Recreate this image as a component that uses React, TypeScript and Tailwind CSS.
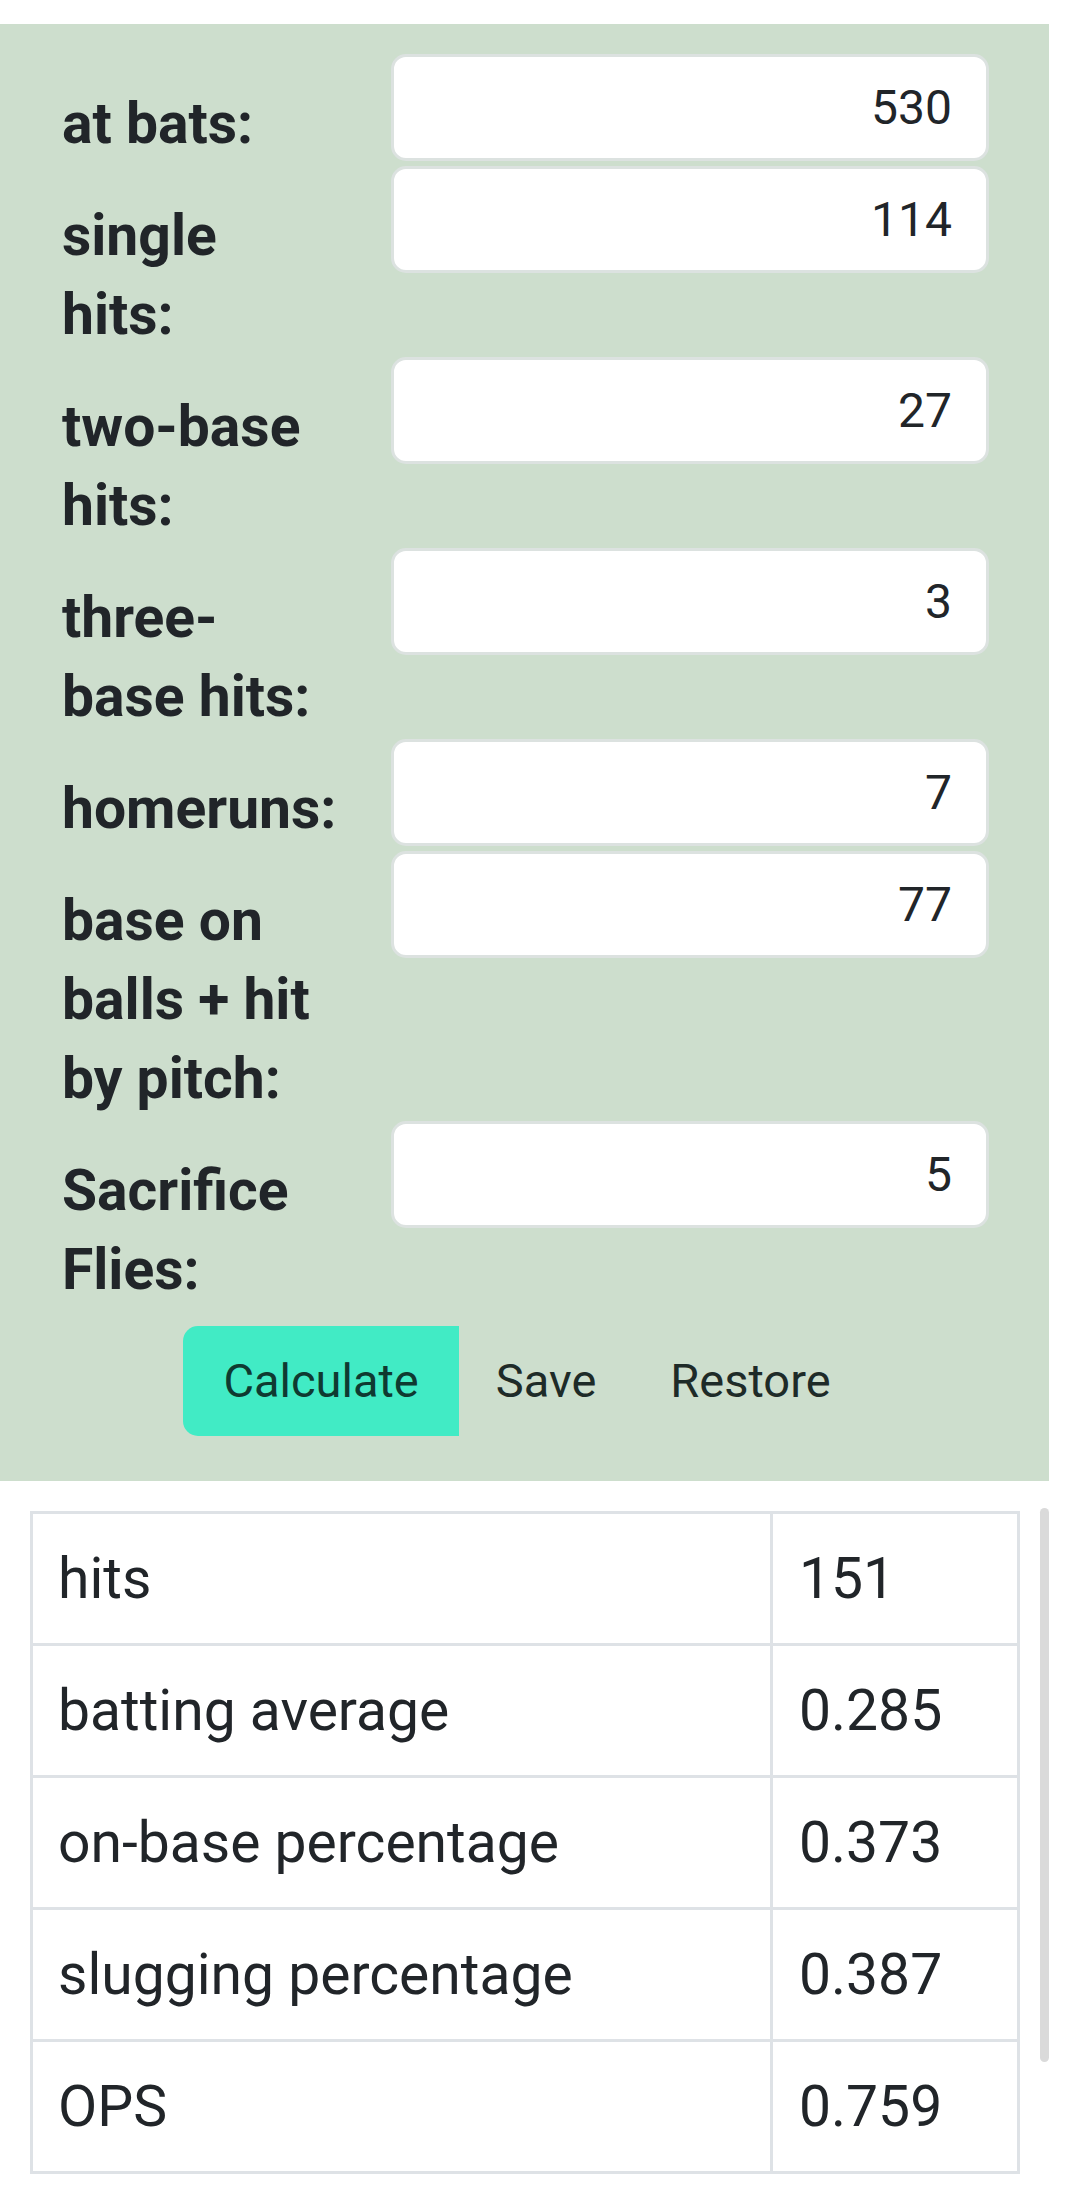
import React from "react";

type Field = { lines: string[]; value: string };

const fields: Field[] = [
  { lines: ["at bats:"], value: "530" },
  { lines: ["single", "hits:"], value: "114" },
  { lines: ["two-base", "hits:"], value: "27" },
  { lines: ["three-", "base hits:"], value: "3" },
  { lines: ["homeruns:"], value: "7" },
  { lines: ["base on", "balls + hit", "by pitch:"], value: "77" },
  { lines: ["Sacrifice", "Flies:"], value: "5" },
];

const results = [
  { label: "hits", value: "151" },
  { label: "batting average", value: "0.285" },
  { label: "on-base percentage", value: "0.373" },
  { label: "slugging percentage", value: "0.387" },
  { label: "OPS", value: "0.759" },
];

function FieldRow({ field }: { field: Field }) {
  return (
    <div className="flex items-start">
      <label className="w-[329px] shrink-0 pt-[30px] pb-[3px] text-[57px] leading-[79px] font-bold text-[#212529]">
        {field.lines.map((line) => (
          <span key={line} className="block whitespace-nowrap">
            {line}
          </span>
        ))}
      </label>
      <input
        type="text"
        readOnly
        defaultValue={field.value}
        className="h-[107px] min-w-0 flex-1 rounded-[15px] border-[3px] border-[#dce2e0] bg-white pr-[34px] text-right text-[48px] text-[#212529] outline-none"
      />
    </div>
  );
}

export default function App() {
  return (
    <div className="w-[1049px] pt-[24px] font-['Roboto',sans-serif] text-[#212529]">
      <form className="bg-[#cddecd] pl-[62px] pr-[60px] pt-[30px] pb-[45px]">
        {fields.map((field) => (
          <FieldRow key={field.lines.join(" ")} field={field} />
        ))}

        <div className="mt-[14px] flex justify-center">
          <button type="button" className="h-[110px] rounded-l-[15px] bg-[#41ebc5] px-[40px] text-[47px] text-[#0f3a31]">
            Calculate
          </button>
          <button type="button" className="h-[110px] px-[37px] text-[47px] text-[#1e2b28]">
            Save
          </button>
          <button type="button" className="h-[110px] px-[37px] text-[47px] text-[#1e2b28]">
            Restore
          </button>
        </div>
      </form>

      <div className="mt-[30px] flex items-start pl-[30px]">
        <div className="w-[990px] border-x-[3px] border-t-[3px] border-[#dee2e6] text-[57px]">
          {results.map((row) => (
            <div key={row.label} className="flex h-[132px] border-b-[3px] border-[#dee2e6]">
              <div className="flex w-[740px] items-center border-r-[3px] border-[#dee2e6] pl-[25px]">{row.label}</div>
              <div className="flex flex-1 items-center pl-[26px]">{row.value}</div>
            </div>
          ))}
        </div>
        <div className="ml-[20px] mt-[-3px] h-[554px] w-[9px] rounded-full bg-[#dadada]" />
      </div>
    </div>
  );
}
